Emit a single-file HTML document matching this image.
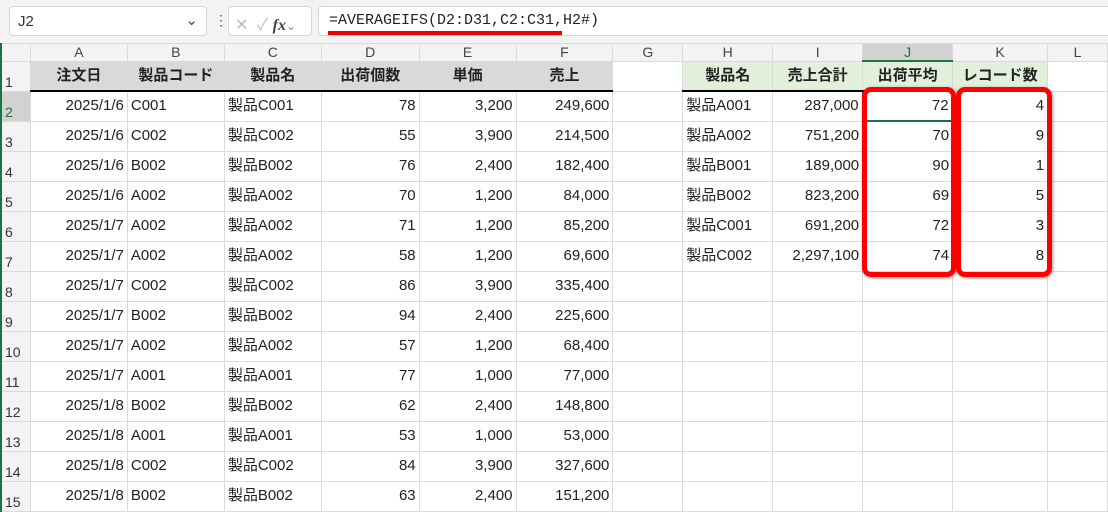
<!DOCTYPE html>
<html><head><meta charset="utf-8"><style>
*{margin:0;padding:0;box-sizing:border-box}
body{width:1108px;height:512px;overflow:hidden;background:#fff;font-family:"Liberation Sans","Noto Sans CJK JP",sans-serif;position:relative;color:#222}
.top{position:absolute;left:0;top:0;width:1108px;height:43px;background:#f3f3f3}
.nb{position:absolute;left:9px;top:6px;width:198px;height:30px;background:#fff;border:1px solid #d6d6d6;border-radius:4px;font-size:15px;padding:6px 0 0 8px;color:#333}
.fxb{position:absolute;left:228px;top:6px;width:84px;height:30px;background:#fff;border:1px solid #d6d6d6;border-radius:4px;color:#bbb;font-size:16px;padding:4px 0 0 6px}
.fml{position:absolute;left:318px;top:6px;width:800px;height:30px;background:#fff;border:1px solid #d6d6d6;border-radius:4px;font-family:"Liberation Mono",monospace;font-size:15px;padding:5px 0 0 10px;color:#222}
.ul{position:absolute;left:328px;top:31px;width:234px;height:4px;background:#e00}
table{position:absolute;left:0;top:43px;border-collapse:collapse;table-layout:fixed;font-size:15px}
td{border:1px solid #dadada;height:30px;white-space:nowrap;overflow:hidden;padding:0 3px;vertical-align:middle;line-height:16px}
tr.ch td{height:17px;background:#f3f3f3;text-align:center;color:#444;font-size:14px;border-color:#dadada;padding:0}
td.rh{background:#f3f3f3;color:#333;text-align:left;padding:12px 0 0 4px;font-size:14px;vertical-align:bottom;padding-bottom:1px}
.r{text-align:right}
.g{background:#d9d9d9;font-weight:bold;text-align:center;border-bottom:2px solid #000}
.gr{background:#e2efda;font-weight:bold;text-align:center}
.j{font-family:"Noto Sans CJK JP",sans-serif;font-size:14.5px;position:relative;top:-1px}
.box{position:absolute;border:5px solid #f00;border-radius:9px;box-shadow:1px 1px 3px rgba(0,0,0,.4)}
</style></head><body>
<div class="top"></div>
<div class="nb">J2<span style="position:absolute;right:8px;top:4px;color:#444">⌄</span></div>
<div style="position:absolute;left:214px;top:12px;color:#555;font-size:14px">⋮</div>
<div class="fxb">✕ &nbsp;✓ <i style="color:#444;font-family:'Liberation Serif',serif;font-weight:bold">fx</i><span style="color:#888;font-size:12px">⌄</span></div>
<div class="fml">=AVERAGEIFS(D2:D31,C2:C31,H2#)</div>
<div class="ul"></div>
<div style="position:absolute;left:0;top:43px;width:2px;height:469px;background:#1e7145;z-index:5"></div>
<table>
<colgroup><col style="width:30px"><col style="width:97px"><col style="width:97px"><col style="width:97px"><col style="width:98px"><col style="width:97px"><col style="width:97px"><col style="width:70px"><col style="width:90px"><col style="width:90px"><col style="width:90px"><col style="width:95px"><col style="width:60px"></colgroup>
<tr class="ch"><td style="background:#f3f3f3"></td><td>A</td><td>B</td><td>C</td><td>D</td><td>E</td><td>F</td><td>G</td><td>H</td><td>I</td><td style="background:#d2d2d2;border-bottom:2px solid #1e7145;color:#1e7145">J</td><td>K</td><td>L</td></tr>
<tr><td class="rh">1</td><td class="g">注文日</td><td class="g">製品コード</td><td class="g">製品名</td><td class="g">出荷個数</td><td class="g">単価</td><td class="g">売上</td><td></td><td class="gr" style="border-bottom:2px solid #000">製品名</td><td class="gr" style="border-bottom:2px solid #000">売上合計</td><td class="gr">出荷平均</td><td class="gr">レコード数</td><td></td></tr>
<tr><td class="rh" style="background:#d2d2d2;color:#1e7145">2</td><td class="r">2025/1/6</td><td>C001</td><td>製品C001</td><td class="r">78</td><td class="r">3,200</td><td class="r">249,600</td><td></td><td>製品A001</td><td class="r">287,000</td><td class="r" style="border:2px solid #1e7145">72</td><td class="r">4</td><td></td></tr>
<tr><td class="rh">3</td><td class="r">2025/1/6</td><td>C002</td><td>製品C002</td><td class="r">55</td><td class="r">3,900</td><td class="r">214,500</td><td></td><td>製品A002</td><td class="r">751,200</td><td class="r">70</td><td class="r">9</td><td></td></tr>
<tr><td class="rh">4</td><td class="r">2025/1/6</td><td>B002</td><td>製品B002</td><td class="r">76</td><td class="r">2,400</td><td class="r">182,400</td><td></td><td>製品B001</td><td class="r">189,000</td><td class="r">90</td><td class="r">1</td><td></td></tr>
<tr><td class="rh">5</td><td class="r">2025/1/6</td><td>A002</td><td>製品A002</td><td class="r">70</td><td class="r">1,200</td><td class="r">84,000</td><td></td><td>製品B002</td><td class="r">823,200</td><td class="r">69</td><td class="r">5</td><td></td></tr>
<tr><td class="rh">6</td><td class="r">2025/1/7</td><td>A002</td><td>製品A002</td><td class="r">71</td><td class="r">1,200</td><td class="r">85,200</td><td></td><td>製品C001</td><td class="r">691,200</td><td class="r">72</td><td class="r">3</td><td></td></tr>
<tr><td class="rh">7</td><td class="r">2025/1/7</td><td>A002</td><td>製品A002</td><td class="r">58</td><td class="r">1,200</td><td class="r">69,600</td><td></td><td>製品C002</td><td class="r">2,297,100</td><td class="r">74</td><td class="r">8</td><td></td></tr>
<tr><td class="rh">8</td><td class="r">2025/1/7</td><td>C002</td><td>製品C002</td><td class="r">86</td><td class="r">3,900</td><td class="r">335,400</td><td></td><td></td><td></td><td></td><td></td><td></td></tr>
<tr><td class="rh">9</td><td class="r">2025/1/7</td><td>B002</td><td>製品B002</td><td class="r">94</td><td class="r">2,400</td><td class="r">225,600</td><td></td><td></td><td></td><td></td><td></td><td></td></tr>
<tr><td class="rh">10</td><td class="r">2025/1/7</td><td>A002</td><td>製品A002</td><td class="r">57</td><td class="r">1,200</td><td class="r">68,400</td><td></td><td></td><td></td><td></td><td></td><td></td></tr>
<tr><td class="rh">11</td><td class="r">2025/1/7</td><td>A001</td><td>製品A001</td><td class="r">77</td><td class="r">1,000</td><td class="r">77,000</td><td></td><td></td><td></td><td></td><td></td><td></td></tr>
<tr><td class="rh">12</td><td class="r">2025/1/8</td><td>B002</td><td>製品B002</td><td class="r">62</td><td class="r">2,400</td><td class="r">148,800</td><td></td><td></td><td></td><td></td><td></td><td></td></tr>
<tr><td class="rh">13</td><td class="r">2025/1/8</td><td>A001</td><td>製品A001</td><td class="r">53</td><td class="r">1,000</td><td class="r">53,000</td><td></td><td></td><td></td><td></td><td></td><td></td></tr>
<tr><td class="rh">14</td><td class="r">2025/1/8</td><td>C002</td><td>製品C002</td><td class="r">84</td><td class="r">3,900</td><td class="r">327,600</td><td></td><td></td><td></td><td></td><td></td><td></td></tr>
<tr><td class="rh">15</td><td class="r">2025/1/8</td><td>B002</td><td>製品B002</td><td class="r">63</td><td class="r">2,400</td><td class="r">151,200</td><td></td><td></td><td></td><td></td><td></td><td></td></tr>
</table>
<div class="box" style="left:862px;top:87px;width:94px;height:190px"></div>
<div class="box" style="left:956px;top:87px;width:96px;height:190px"></div>
</body></html>
